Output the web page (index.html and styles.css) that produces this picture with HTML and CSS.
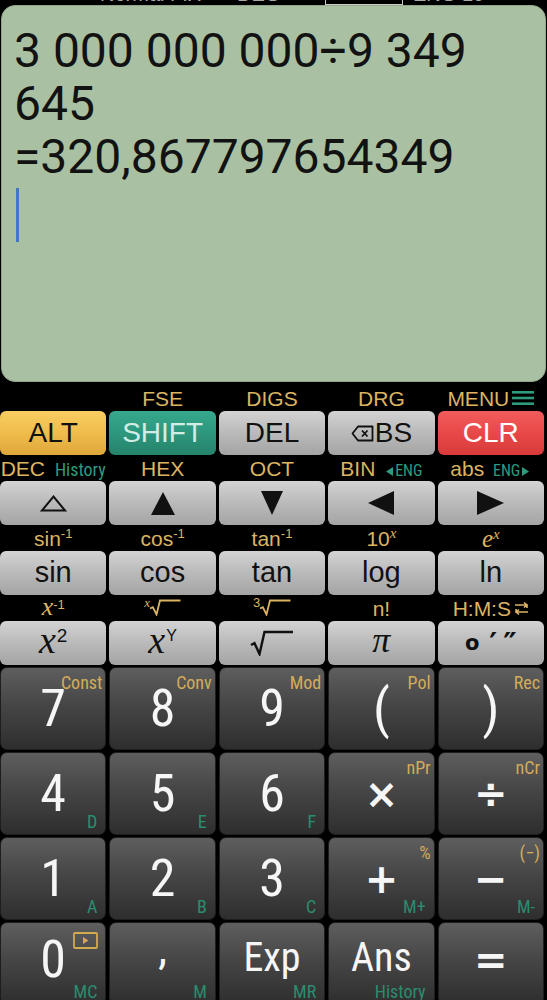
FILE: index.html
```html
<!DOCTYPE html>
<html lang="en">
<head>
    <meta charset="UTF-8">
    <meta name="viewport" content="width=device-width, initial-scale=1.0">
    <title>Scientific Calculator</title>
    <link rel="stylesheet" href="styles.css">
</head>
<body>
    <div class="status">
        <span class="w1">Normal FIX</span><span class="w2">DEG</span><span class="boxed">RAD</span><span class="w4">ENG 10</span>
    </div>

    <div class="screen">
        <div class="expr">3 000 000 000÷9 349 645</div>
        <div class="expr">=320,867797654349</div>
        <div class="cursor"></div>
    </div>

    <div class="fn">
        <!-- row 1 -->
        <div class="label"></div>
        <div class="label">FSE</div>
        <div class="label">DIGS</div>
        <div class="label">DRG</div>
        <div class="label">MENU<svg class="menu-icon" width="22" height="16" viewBox="0 0 22 16"><rect x="0" y="1" width="22" height="2.6"/><rect x="0" y="6.7" width="22" height="2.6"/><rect x="0" y="12.4" width="22" height="2.6"/></svg></div>

        <button class="key alt">ALT</button>
        <button class="key shift">SHIFT</button>
        <button class="key gray">DEL</button>
        <button class="key gray"><svg class="bs-icon" width="23" height="17" viewBox="0 0 23 17"><path d="M7 1.5 H21.5 V15.5 H7 L1.5 8.5 Z" fill="none" stroke="#111" stroke-width="1.8" stroke-linejoin="round"/><path d="M11 5.5 L16.5 11.5 M16.5 5.5 L11 11.5" stroke="#111" stroke-width="1.8"/></svg>BS</button>
        <button class="key clr">CLR</button>

        <!-- row 2 -->
        <div class="label">DEC <span class="green">History</span></div>
        <div class="label">HEX</div>
        <div class="label">OCT</div>
        <div class="label">BIN <span class="green small"><svg width="7" height="9" viewBox="0 0 7 9"><path d="M7 0 V9 L0 4.5 Z"/></svg>ENG</span></div>
        <div class="label">abs <span class="green small">ENG<svg width="7" height="9" viewBox="0 0 7 9"><path d="M0 0 V9 L7 4.5 Z"/></svg></span></div>

        <button class="key gray"><svg width="27" height="17" viewBox="0 0 27 17"><path d="M2 15.5 H25 L13.5 1.5 Z" fill="none" stroke="#111" stroke-width="2" stroke-linejoin="miter"/></svg></button>
        <button class="key gray"><svg width="24" height="23" viewBox="0 0 24 23"><path d="M0 23 H24 L12 0 Z" fill="#111"/></svg></button>
        <button class="key gray"><svg width="22" height="24" viewBox="0 0 22 24"><path d="M0 0 H22 L11 24 Z" fill="#111"/></svg></button>
        <button class="key gray"><svg width="26" height="24" viewBox="0 0 26 24"><path d="M26 0 V24 L0 12 Z" fill="#111"/></svg></button>
        <button class="key gray"><svg width="27" height="24" viewBox="0 0 27 24"><path d="M0 0 V24 L27 12 Z" fill="#111"/></svg></button>

        <!-- row 3 -->
        <div class="label">sin<sup class="pow">-1</sup></div>
        <div class="label">cos<sup class="pow">-1</sup></div>
        <div class="label">tan<sup class="pow">-1</sup></div>
        <div class="label">10<sup class="pow ital">x</sup></div>
        <div class="label"><span class="ital big">e</span><sup class="pow ital">x</sup></div>

        <button class="key gray word">sin</button>
        <button class="key gray word">cos</button>
        <button class="key gray word">tan</button>
        <button class="key gray word">log</button>
        <button class="key gray word">ln</button>

        <!-- row 4 -->
        <div class="label"><span class="ital xl">x</span><sup class="pow">-1</sup></div>
        <div class="label"><sup class="root-idx ital">x</sup><svg width="32" height="17" viewBox="0 0 32 17"><path d="M1 9.5 L3.8 8.2 L7.5 15.5 L11 1.5 H31.5" fill="none" stroke="#dcb462" stroke-width="1.8"/></svg></div>
        <div class="label"><sup class="root-idx">3</sup><svg width="32" height="17" viewBox="0 0 32 17"><path d="M1 9.5 L3.8 8.2 L7.5 15.5 L11 1.5 H31.5" fill="none" stroke="#dcb462" stroke-width="1.8"/></svg></div>
        <div class="label">n!</div>
        <div class="label">H:M:S<svg class="swap-icon" width="15" height="15" viewBox="0 0 15 15"><path d="M1 4 H13 V7 M10 1.5 L13 4 L10 6.5 M14 11 H2 V8 M5 8.5 L2 11 L5 13.5" fill="none" stroke="#dcb462" stroke-width="1.6"/></svg></div>

        <button class="key gray"><span class="math">x</span><sup class="sq">2</sup></button>
        <button class="key gray"><span class="math">x</span><sup class="sq sy">Y</sup></button>
        <button class="key gray"><svg width="44" height="26" viewBox="0 0 44 26"><path d="M1 15 L4.5 13.2 L9.5 24 L14.5 2 H43" fill="none" stroke="#111" stroke-width="2.4"/></svg></button>
        <button class="key gray"><span class="math pi">π</span></button>
        <button class="key gray dms"><span class="deg">o</span><span class="prime">′</span><span class="prime">″</span></button>
    </div>

    <div class="numpad">
        <button class="num">7<span class="sup">Const</span></button>
        <button class="num">8<span class="sup">Conv</span></button>
        <button class="num">9<span class="sup">Mod</span></button>
        <button class="num paren">(<span class="sup">Pol</span></button>
        <button class="num paren">)<span class="sup">Rec</span></button>

        <button class="num">4<span class="sub">D</span></button>
        <button class="num">5<span class="sub">E</span></button>
        <button class="num">6<span class="sub">F</span></button>
        <button class="num op">×<span class="sup">nPr</span></button>
        <button class="num op">÷<span class="sup">nCr</span></button>

        <button class="num">1<span class="sub">A</span></button>
        <button class="num">2<span class="sub">B</span></button>
        <button class="num">3<span class="sub">C</span></button>
        <button class="num op">+<span class="sup">%</span><span class="sub">M+</span></button>
        <button class="num op">−<span class="sup">(−)</span><span class="sub">M-</span></button>

        <button class="num last">0<svg class="play-icon" width="25" height="17" viewBox="0 0 25 17"><rect x="1" y="1" width="23" height="15" rx="1" fill="none" stroke="#d4a94f" stroke-width="1.8"/><path d="M10 5 L15.5 8.5 L10 12 Z" fill="#d4a94f"/></svg><span class="sub">MC</span></button>
        <button class="num last"><span class="comma">,</span><span class="sub">M</span></button>
        <button class="num last word-num">Exp<span class="sub">MR</span></button>
        <button class="num last word-num">Ans<span class="sub">History</span></button>
        <button class="num last op">=</button>
    </div>
</body>
</html>
```

FILE: styles.css
```css
/* Scientific calculator */
* {
    box-sizing: border-box;
}

body {
    margin: 0;
    background: #000;
    font-family: "Liberation Sans", Arial, sans-serif;
}

/* status line, mostly scrolled off the top */
.status {
    height: 5px;
    overflow: hidden;
    display: flex;
    align-items: flex-end;
    padding-left: 100px;
    color: #aaa;
    font-size: 20px;
}

.status span {
    line-height: 22px;
    white-space: nowrap;
    overflow: hidden;
}

.status .w1 {
    width: 120px;
}

.status .w2 {
    width: 56px;
    margin-left: 17px;
}

.status .boxed {
    width: 78px;
    margin-left: 32px;
    padding-left: 16px;
    border: 1px solid #ccc;
}

.status .w4 {
    width: 97px;
    margin-left: 10px;
}

/* display */
.screen {
    height: 377px;
    margin: 0 1px;
    padding: 18px 14px 0 12px;
    background: #a9c1a2;
    border: 1px solid #91a78b;
    border-radius: 14px;
}

.expr {
    font-family: Roboto, "Liberation Sans", sans-serif;
    font-size: 48px;
    line-height: 53px;
    color: #121212;
}

.cursor {
    width: 2.5px;
    height: 54px;
    margin: 5px 0 0 2px;
    background: #4277c6;
}

/* function keys */
.fn {
    display: grid;
    grid-template-columns: repeat(5, 1fr);
    grid-template-rows: repeat(4, 26px 44px);
    column-gap: 3px;
    margin: 3px 3px 0 0;
}

.label {
    padding-top: 3px;
    text-align: center;
    font-size: 21px;
    line-height: 21px;
    color: #dcb462;
    white-space: nowrap;
}

.label svg {
    vertical-align: baseline;
}

.label .green {
    margin-left: 4px;
    font-family: "Roboto Condensed", "DejaVu Sans Condensed", sans-serif;
    font-size: 18px;
    color: #2e9a7e;
}

.label .small {
    margin-left: 3px;
    font-size: 16px;
}

.label .small svg {
    fill: #2e9a7e;
    margin: 0 2px;
}

.menu-icon {
    fill: #2e9a7e;
    margin-left: 3px;
}

.swap-icon {
    margin-left: 3px;
}

.pow {
    font-size: 13px;
    line-height: 0;
    vertical-align: 8px;
}

.ital {
    font-family: "Liberation Serif", "Times New Roman", serif;
    font-style: italic;
}

.pow.ital {
    font-size: 15px;
}

.big {
    font-size: 25px;
}

.xl {
    font-size: 26px;
    line-height: 18px;
    vertical-align: 2px;
}

.root-idx {
    font-size: 13px;
    line-height: 0;
    vertical-align: 9px;
    margin-right: -1px;
}

.key {
    display: flex;
    align-items: center;
    justify-content: center;
    padding: 0;
    border: none;
    border-radius: 6px;
    font-family: "Liberation Sans", Arial, sans-serif;
    font-size: 28px;
    color: #111;
    cursor: pointer;
}

.key.gray {
    background: linear-gradient(#d3d3d3, #bcbcbc 45%, #a4a4a4);
}

.key.alt {
    background: linear-gradient(#f8cd62, #efbd4b 50%, #dea73a);
}

.key.shift {
    background: linear-gradient(#36a88d, #2d977c 50%, #25836b);
    color: #d3ece4;
}

.key.clr {
    background: linear-gradient(#f25c5c, #e84848 50%, #d83a3a);
    color: #fff;
}

.key.word {
    font-size: 29px;
    padding-bottom: 2px;
}

.bs-icon {
    margin-right: 1px;
}

.math {
    font-family: "Liberation Serif", "Times New Roman", serif;
    font-style: italic;
    font-size: 38px;
    line-height: 1;
    margin-bottom: 6px;
}

.math.pi {
    font-size: 36px;
}

.sq {
    font-size: 19px;
    line-height: 0;
    margin: 0 0 14px 1px;
}

.sq.sy {
    font-size: 16px;
}

.dms {
    font-family: "DejaVu Sans", sans-serif;
    font-weight: bold;
    gap: 6px;
}

.deg {
    font-size: 21px;
    margin-right: 4px;
}

.prime {
    font-size: 30px;
}

/* number pad */
.numpad {
    display: grid;
    grid-template-columns: repeat(5, 1fr);
    grid-auto-rows: 83px;
    gap: 2px 3px;
    margin: 2px 3px 0 0;
}

.num {
    position: relative;
    display: flex;
    align-items: center;
    justify-content: center;
    padding: 0;
    border: 1px solid #1e1e1e;
    border-radius: 7px;
    background: linear-gradient(#5e5e5e, #464646 45%, #2e2e2e);
    font-family: "Roboto Condensed", "DejaVu Sans Condensed", sans-serif;
    font-size: 52px;
    line-height: 1;
    color: #f6f6f6;
    cursor: pointer;
}

.num.last {
    padding-bottom: 8px;
}

.num.paren {
    font-size: 54px;
}

.num.op {
    font-family: "DejaVu Sans", sans-serif;
    font-weight: bold;
    font-size: 40px;
}

.num.word-num {
    font-size: 40px;
    padding-bottom: 12px;
}

.comma {
    font-size: 44px;
    margin-bottom: 22px;
}

.sup,
.sub {
    position: absolute;
    right: 4px;
    font-family: "Roboto Condensed", "DejaVu Sans Condensed", sans-serif;
    font-weight: normal;
    font-size: 18px;
    line-height: 1;
}

.sup {
    top: 6px;
    right: 3px;
    color: #d4ac5a;
}

.sub {
    bottom: 3px;
    right: 8px;
    color: #2b8c6f;
}

.play-icon {
    position: absolute;
    top: 9px;
    right: 7px;
}
```
